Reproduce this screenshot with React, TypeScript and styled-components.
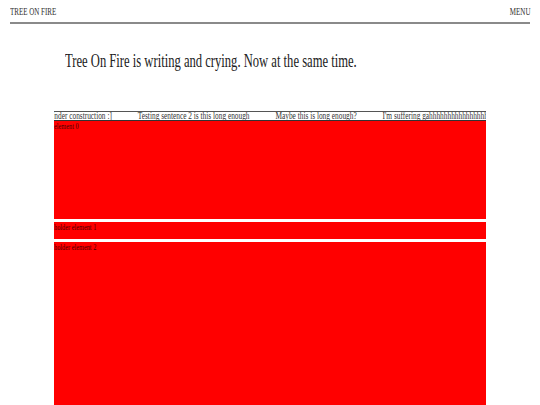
import styled, { createGlobalStyle } from "styled-components";

const GlobalStyle = createGlobalStyle`
  html, body {
    margin: 0;
    padding: 0;
    background: #fff;
  }
  body {
    font-family: "Liberation Serif", "Times New Roman", serif;
    color: #222;
    overflow: hidden;
  }
`;

// the original face is a narrow serif, squeeze Liberation Serif to match
const Narrow = styled.span<{ $origin?: string }>`
  display: inline-block;
  white-space: nowrap;
  transform: scaleX(0.7);
  transform-origin: ${(p) => p.$origin || "left"} center;
`;

const Header = styled.header`
  margin: 0 10px;
  height: 22px;
  display: flex;
  align-items: center;
  justify-content: space-between;
  border-bottom: 2px solid #8a8a8a;
  font-size: 10px;
  color: #333;
`;

const Main = styled.main`
  width: 80%;
  margin: 0 auto;
`;

const Title = styled.h1`
  margin: 26px 0 0;
  padding-left: 11px;
  height: 61px;
  font-size: 18px;
  font-weight: normal;
  line-height: 22px;
  color: #222;
`;

const Strip = styled.div`
  overflow: hidden;
  border-top: 1px solid #555;
  border-bottom: 1px solid #333;
  height: 8px;
  line-height: 8px;
`;

const Track = styled.div`
  display: flex;
  gap: 37px;
  white-space: nowrap;
  font-size: 10.5px;
  color: #333;
  transform: translateX(-5px) scaleX(0.7);
  transform-origin: left center;
`;

const Blocks = styled.div`
  display: flex;
  flex-direction: column;
  gap: 3px;
`;

const Block = styled.div<{ $h: number }>`
  height: ${(p) => p.$h}px;
  background: #ff0000;
  color: #4a0000;
  font-size: 9px;
  line-height: 10px;
`;

const words = [
  "Under construction :]",
  "Testing sentence 2 is this long enough",
  "Maybe this is long enough?",
  "I'm suffering gahhhhhhhhhhhhhhhhhhhhhh",
];

const blocks = [
  { label: "element 0", h: 98 },
  { label: "holder element 1", h: 17 },
  { label: "holder element 2", h: 300 },
];

export default function App() {
  return (
    <>
      <GlobalStyle />
      <Header>
        <Narrow>TREE ON FIRE</Narrow>
        <Narrow $origin="right">MENU</Narrow>
      </Header>
      <Main>
        <Title>
          <Narrow>Tree On Fire is writing and crying. Now at the same time.</Narrow>
        </Title>
        <Strip>
          <Track>
            {words.map((w) => (
              <span key={w}>{w}</span>
            ))}
          </Track>
        </Strip>
        <Blocks>
          {blocks.map((b) => (
            <Block key={b.label} $h={b.h}>
              <Narrow>{b.label}</Narrow>
            </Block>
          ))}
        </Blocks>
      </Main>
    </>
  );
}
